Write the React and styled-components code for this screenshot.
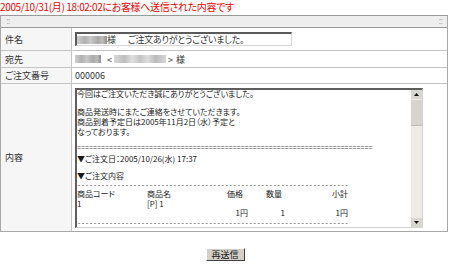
import React from "react";
import styled, { createGlobalStyle } from "styled-components";

const Global = createGlobalStyle`
  html, body { margin: 0; padding: 0; background: #fff; }
  body { font-family: "Noto Sans CJK JP", "Noto Sans", sans-serif; color: #222; }
`;

const Page = styled.div`
  width: 450px;
  height: 264px;
  overflow: hidden;
`;

const Title = styled.div`
  color: #f00000;
  font-size: 10px;
  line-height: 14px;
  height: 15px;
  font-feature-settings: "palt";
  letter-spacing: -0.35px;
  white-space: nowrap;
`;

const Panel = styled.div`
  width: 446px;
  border: 1px solid #a8a8a8;
  border-top-color: #999;
`;

const HeaderBar = styled.div`
  height: 11px;
  display: flex;
  align-items: center;
  justify-content: space-between;
  padding: 0 5px;
  background-color: #eeeeee;
  background-image: radial-gradient(#dcdcdc 0.6px, transparent 0.7px);
  background-size: 2px 2px;
  border-bottom: 1px solid #999;
`;

const Grip = styled.span`
  font-family: "DejaVu Sans", sans-serif;
  font-size: 8px;
  line-height: 8px;
  color: #a0a0a0;
  letter-spacing: -1px;
`;

const Row = styled.div`
  display: grid;
  grid-template-columns: 71px 1fr;
  height: ${(p) => p.$h}px;
  border-bottom: ${(p) => (p.$last ? "none" : "1px solid #c4c4c4")};
`;

const Label = styled.div`
  background: #f6f6f6;
  border-right: 1px solid #c4c4c4;
  display: flex;
  align-items: center;
  padding-left: 4px;
  font-size: 9px;
  font-feature-settings: "palt";
  color: #333;
`;

const Value = styled.div`
  display: flex;
  align-items: ${(p) => (p.$top ? "flex-start" : "center")};
  padding-left: 3px;
  padding-top: ${(p) => (p.$top ? "4px" : "0")};
  font-size: 9px;
  font-feature-settings: "palt";
  color: #333;
  white-space: nowrap;
`;

const TextInput = styled.div`
  box-sizing: border-box;
  width: 217px;
  height: 14px;
  border-top: 2px solid #5a5a5a;
  border-left: 2px solid #5a5a5a;
  border-right: 1px solid #d8d8d8;
  border-bottom: 1px solid #d8d8d8;
  display: flex;
  align-items: center;
  padding-left: 0;
  font-size: 9px;
  font-feature-settings: "palt";
  letter-spacing: -0.25px;
`;

const Blur = styled.span`
  display: inline-block;
  width: ${(p) => p.$w}px;
  height: 8px;
  margin: 0 ${(p) => p.$m || 0}px;
  background: ${(p) =>
    p.$light
      ? "linear-gradient(90deg,#d8d8d8,#bdbdbd 20%,#e0e0e0 35%,#c4c4c4 50%,#dcdcdc 65%,#bababa 80%,#d6d6d6)"
      : "linear-gradient(90deg,#cfcfcf,#b0b0b0 25%,#c8c8c8 45%,#a8a8a8 70%,#bdbdbd 85%,#8f8f8f)"};
  filter: blur(0.4px);
`;

const Gap = styled.span`
  display: inline-block;
  width: ${(p) => p.$w}px;
`;

const TextArea = styled.div`
  box-sizing: border-box;
  width: 348px;
  height: 140px;
  border-top: 2px solid #5e5e5e;
  border-left: 2px solid #5e5e5e;
  border-right: 1px solid #d4d4d4;
  border-bottom: 1px solid #d4d4d4;
  display: flex;
  overflow: hidden;
`;

const AreaBody = styled.div`
  flex: 1;
  overflow: hidden;
  font-size: 8px;
  line-height: 10px;
  color: #1a1a1a;
  margin-top: -1px;
`;

const Line = styled.div`
  white-space: nowrap;
  height: 10px;
  margin-top: ${(p) => p.$mt || 0}px;
`;

const Rule = styled.div`
  height: ${(p) => p.$h || 10}px;
  margin-top: ${(p) => p.$mt || 0}px;
  white-space: nowrap;
  font-family: "Liberation Mono", monospace;
  font-size: 6.67px;
  line-height: ${(p) => p.$h || 10}px;
  color: #444;
`;

const Items = styled.div`
  display: grid;
  grid-template-columns: 70px 60px 41px 37px 63px;
  grid-auto-rows: 9.5px;
  line-height: 9.5px;
`;

const Cell = styled.div`
  text-align: ${(p) => (p.$r ? "right" : "left")};
  padding-right: ${(p) => p.$pr || 0}px;
  white-space: nowrap;
`;

const ScrollBar = styled.div`
  width: 11px;
  display: flex;
  flex-direction: column;
  background: #ecebe6;
`;

const ScrollBtn = styled.div`
  height: 9px;
  background: #d8d6d0;
  display: flex;
  align-items: center;
  justify-content: center;
  border-bottom: ${(p) => (p.$down ? "none" : "1px solid #ecebe6")};
  border-top: ${(p) => (p.$down ? "1px solid #ecebe6" : "none")};
`;

const Thumb = styled.div`
  height: 25px;
  background: #d6d4ce;
  border-bottom: 1px solid #bdbbb5;
`;

const Track = styled.div`
  flex: 1;
`;

const Arrow = ({ down }) => (
  <svg width="5" height="3" viewBox="0 0 5 3">
    <path d={down ? "M0 0H5L2.5 3Z" : "M0 3H5L2.5 0Z"} fill="#111" />
  </svg>
);

const ButtonRow = styled.div`
  display: flex;
  justify-content: center;
  padding-top: 16px;
`;

const Button = styled.button`
  box-sizing: border-box;
  width: 39px;
  height: 13px;
  padding: 0;
  background: #d4d0c8;
  border-top: 1px solid #fff;
  border-left: 1px solid #fff;
  border-right: 1px solid #404040;
  border-bottom: 1px solid #404040;
  font-family: "Noto Sans CJK JP", sans-serif;
  font-size: 9px;
  line-height: 11px;
  color: #111;
`;

export default function App() {
  return (
    <Page>
      <Global />
      <Title>2005/10/31(月) 18:02:02にお客様へ送信された内容です</Title>
      <Panel>
        <HeaderBar>
          <Grip>::</Grip>
          <Grip>::</Grip>
        </HeaderBar>
        <Row $h={22}>
          <Label>件名</Label>
          <Value>
            <TextInput>
              <Blur $w={30} />
              様<Gap $w={12} />ご注文ありがとうございました。
            </TextInput>
          </Value>
        </Row>
        <Row $h={16}>
          <Label>宛先</Label>
          <Value>
            <Blur $w={26} />
            <Gap $w={6} />
            &lt;
            <Blur $w={52} $m={2} $light />
            &gt;<Gap $w={3} />様
          </Value>
        </Row>
        <Row $h={15}>
          <Label>ご注文番号</Label>
          <Value>000006</Value>
        </Row>
        <Row $h={147} $last>
          <Label>内容</Label>
          <Value $top>
            <TextArea>
              <AreaBody>
                <Line $mt={0}>今回はご注文いただき誠にありがとうございました。</Line>
                <Line $mt={8}>商品発送時にまたご連絡をさせていただきます。</Line>
                <Line>商品到着予定日は2005年11月2日（水）予定と</Line>
                <Line>なっております。</Line>
                <Rule $mt={6}>{"=".repeat(74)}</Rule>
                <Line $mt={1}>▼ご注文日：2005/10/26(水) 17:37</Line>
                <Line $mt={7}>▼ご注文内容</Line>
                <Rule $h={8}>{"-".repeat(68)}</Rule>
                <Items>
                  <Cell>商品コード</Cell>
                  <Cell>商品名</Cell>
                  <Cell $r $pr={5}>価格</Cell>
                  <Cell $r $pr={3}>数量</Cell>
                  <Cell $r>小計</Cell>
                  <Cell>1</Cell>
                  <Cell>[P] 1</Cell>
                  <Cell />
                  <Cell />
                  <Cell />
                  <Cell />
                  <Cell />
                  <Cell $r>1円</Cell>
                  <Cell $r>1</Cell>
                  <Cell $r>1円</Cell>
                </Items>
                <Rule>{"-".repeat(68)}</Rule>
              </AreaBody>
              <ScrollBar>
                <ScrollBtn><Arrow /></ScrollBtn>
                <Thumb />
                <Track />
                <ScrollBtn $down><Arrow down /></ScrollBtn>
              </ScrollBar>
            </TextArea>
          </Value>
        </Row>
      </Panel>
      <ButtonRow>
        <Button>再送信</Button>
      </ButtonRow>
    </Page>
  );
}
